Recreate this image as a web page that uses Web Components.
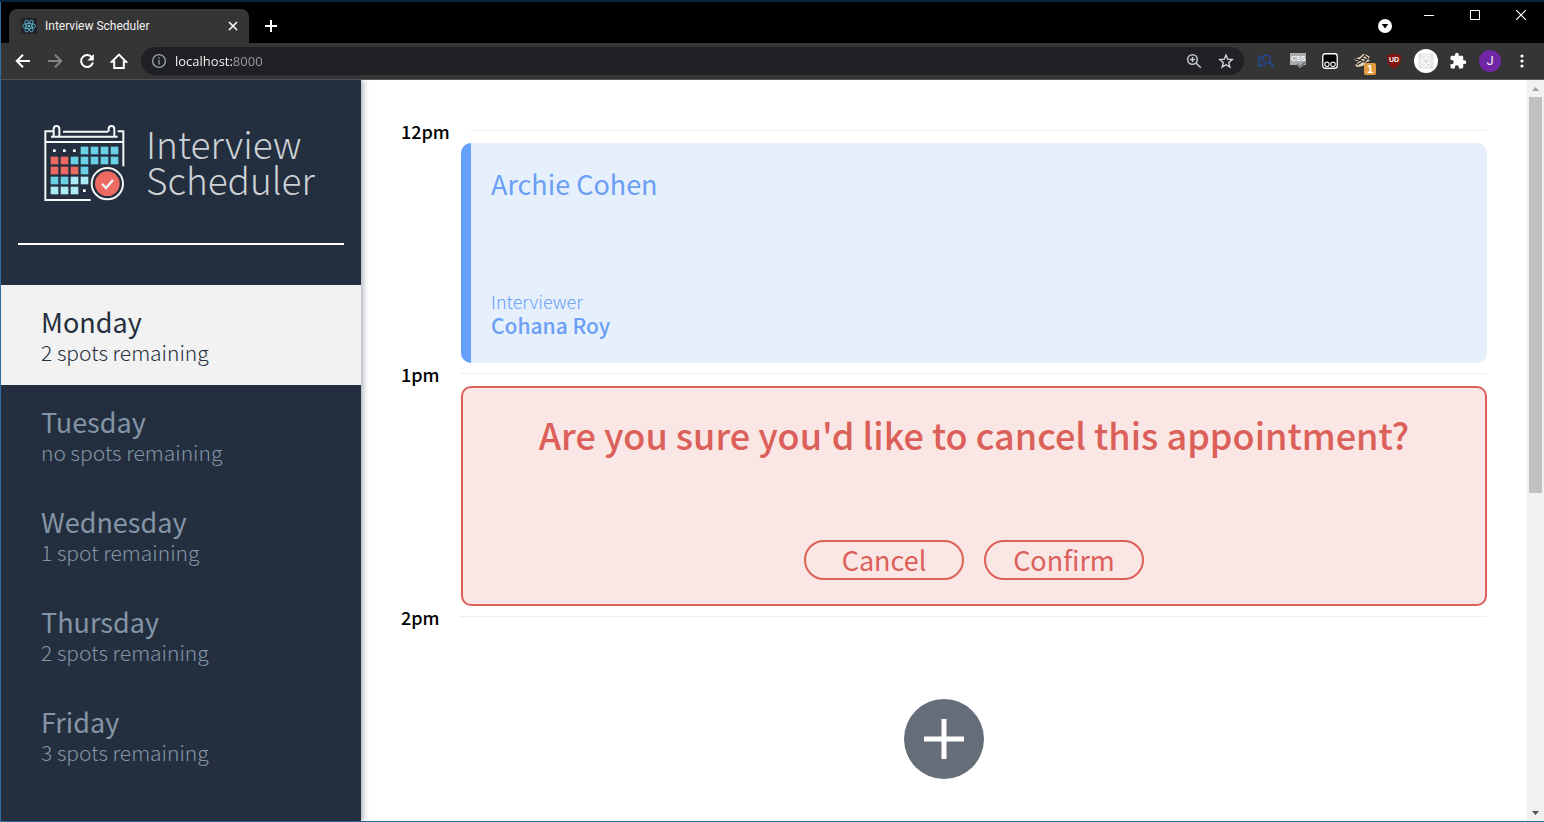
<!DOCTYPE html>
<html lang="en">
<head>
<meta charset="utf-8">
<meta name="viewport" content="width=device-width, initial-scale=1">
<title>Interview Scheduler</title>
<style>
  html, body { margin: 0; height: 100%; }
  body {
    --navy: #232f3e;
    --grey: #8395a7;
    --blue: #649ffa;
    --red: #db6059;
    font-family: "Noto Sans CJK TC", "Noto Sans CJK SC", sans-serif;
    overflow: hidden;
  }
</style>
</head>
<body>
<browser-window>
  <tab-strip slot="tabs"></tab-strip>
  <tool-bar slot="toolbar"></tool-bar>
  <app-sidebar slot="page">
    <day-item name="Monday" spots="2 spots remaining" selected></day-item>
    <day-item name="Tuesday" spots="no spots remaining"></day-item>
    <day-item name="Wednesday" spots="1 spot remaining"></day-item>
    <day-item name="Thursday" spots="2 spots remaining"></day-item>
    <day-item name="Friday" spots="3 spots remaining"></day-item>
  </app-sidebar>
  <app-schedule slot="page">
    <appointment-slot time="12pm">
      <booked-card student="Archie Cohen" interviewer="Cohana Roy"></booked-card>
    </appointment-slot>
    <appointment-slot time="1pm">
      <confirm-card>Are you sure you'd like to cancel this appointment?</confirm-card>
    </appointment-slot>
    <appointment-slot time="2pm">
      <empty-slot></empty-slot>
    </appointment-slot>
  </app-schedule>
  <scroll-rail slot="page"></scroll-rail>
</browser-window>

<script>
const define = (name, render) => customElements.define(name, class extends HTMLElement {
  constructor() {
    super();
    this.attachShadow({ mode: 'open' });
  }
  connectedCallback() {
    this.shadowRoot.innerHTML = render(this);
  }
});

define('browser-window', () => `
  <style>
    :host {
      display: grid; grid-template-rows: 41px 37px minmax(0, 1fr);
      box-sizing: border-box; height: 100vh;
      border-top: 2px solid #06263f; border-bottom: 1px solid #2d6d9f;
      background: #fff;
    }
    .page { display: grid; grid-template-columns: 361px minmax(0, 1fr) 17px; min-height: 0; }
  </style>
  <slot name="tabs"></slot>
  <slot name="toolbar"></slot>
  <div class="page"><slot name="page"></slot></div>`);

define('tab-strip', () => `
  <style>
    :host {
      display: flex; align-items: flex-end; background: #000; padding-left: 8px;
      border-left: 1px solid #2d6d9f;
      font-family: Roboto, "Open Sans", sans-serif;
    }
    button { all: unset; display: flex; align-items: center; justify-content: center; }
    .tab {
      display: flex; align-items: center; box-sizing: border-box;
      width: 240px; height: 34px; padding: 0 9px 0 12px;
      background: #353535; border-radius: 8px 8px 0 0;
      color: #f1f1f1; font-size: 12px; line-height: 16px;
    }
    .favicon { background: #20232a; margin-right: 8px; flex: none; }
    .title { flex: 1; white-space: nowrap; }
    .new { width: 28px; height: 34px; margin-left: 8px; }
    .controls { display: flex; align-items: flex-start; margin-left: auto; align-self: flex-start; }
    .menu { width: 20px; height: 20px; margin-right: 11px; padding-top: 14px; }
    .win { width: 46px; height: 26px; }
  </style>
  <div class="tab">
    <svg class="favicon" width="16" height="16" viewBox="0 0 16 16" fill="none" stroke="#61bcd6" stroke-width=".8">
      <ellipse cx="8" cy="8" rx="6.6" ry="2.6"/>
      <ellipse cx="8" cy="8" rx="6.6" ry="2.6" transform="rotate(60 8 8)"/>
      <ellipse cx="8" cy="8" rx="6.6" ry="2.6" transform="rotate(120 8 8)"/>
      <circle cx="8" cy="8" r="1" fill="#61dafb"/>
    </svg>
    <span class="title">Interview Scheduler</span>
    <button aria-label="Close tab"><svg width="14" height="14" viewBox="0 0 14 14" stroke="#fff" stroke-width="1.6"><path d="M3 3l8 8M11 3l-8 8"/></svg></button>
  </div>
  <button class="new" aria-label="New tab"><svg width="14" height="14" viewBox="0 0 14 14" stroke="#fff" stroke-width="2"><path d="M1 7h12M7 1v12"/></svg></button>
  <div class="controls">
    <button class="menu" aria-label="Search tabs"><svg width="14" height="14" viewBox="0 0 14 14"><circle cx="7" cy="7" r="7" fill="#fff"/><path d="M3.8 5h6.4L7 9.6z" fill="#000"/></svg></button>
    <button class="win" aria-label="Minimize"><svg width="10" height="10" viewBox="0 0 10 10"><path d="M0 5.5h10" stroke="#fff"/></svg></button>
    <button class="win" aria-label="Maximize"><svg width="10" height="10" viewBox="0 0 10 10"><path d="M.5.5h9v9h-9z" fill="none" stroke="#fff"/></svg></button>
    <button class="win" aria-label="Close"><svg width="10" height="10" viewBox="0 0 10 10"><path d="M0 0l10 10M10 0L0 10" stroke="#fff" stroke-width="1.2"/></svg></button>
  </div>`);

define('tool-bar', () => `
  <style>
    :host {
      display: flex; align-items: center; box-sizing: border-box;
      padding: 0 6px;
      background: #353535; border-bottom: 1px solid #5a5a5a; border-left: 1px solid #2d6d9f;
      font-family: "Open Sans", sans-serif;
    }
    button { all: unset; display: flex; align-items: center; justify-content: center; width: 32px; height: 28px; flex: none; }
    .address {
      display: flex; align-items: center; flex: 1; min-width: 0; height: 28px;
      margin: 0 6px; padding: 0 2px 0 10px; background: #202124; border-radius: 14px;
    }
    input {
      flex: 1; min-width: 0; border: 0; outline: 0; padding: 0 0 0 8px; height: 20px;
      font: 13px/20px "Open Sans", sans-serif; color: transparent;
      background: linear-gradient(90deg, #fff 66px, #9a9da1 66px);
      -webkit-background-clip: text; background-clip: text;
    }
    .ext text { font-family: "Liberation Sans", sans-serif; font-weight: bold; }
    .avatar { width: 22px; height: 22px; border-radius: 50%; background: #7127a5; color: #eee; font: 13px/22px Roboto, sans-serif; margin: 0 5px; }
  </style>
  <button aria-label="Back"><svg width="16" height="16" viewBox="0 0 16 16" fill="none" stroke="#fff" stroke-width="2"><path d="M15 8H2M8 1.8L1.8 8 8 14.2"/></svg></button>
  <button aria-label="Forward"><svg width="16" height="16" viewBox="0 0 16 16" fill="none" stroke="#858585" stroke-width="2"><path d="M1 8h13M8 1.8L14.2 8 8 14.2"/></svg></button>
  <button aria-label="Reload"><svg width="16" height="16" viewBox="0 0 16 16"><path d="M13.2 4.8A6 6 0 1 0 13.9 9.6" fill="none" stroke="#fff" stroke-width="2"/><path d="M14.8 1v6.4H8.4z" fill="#fff"/></svg></button>
  <button aria-label="Home"><svg width="18" height="18" viewBox="0 0 18 18"><path d="M1.8 9.8L9 2.6l7.2 7.2h-2.4V16H4.2V9.8z" fill="none" stroke="#fff" stroke-width="2"/></svg></button>
  <div class="address">
    <svg width="16" height="16" viewBox="0 0 16 16" fill="none" stroke="#9aa0a6" stroke-width="1.4"><circle cx="8" cy="8" r="6.4"/><path d="M8 7v4.6M8 4.2v1.6"/></svg>
    <input type="text" value="localhost:8000" aria-label="Address" spellcheck="false">
    <button aria-label="Zoom"><svg width="16" height="16" viewBox="0 0 16 16" fill="none" stroke="#c4c7ca" stroke-width="1.5"><circle cx="6.5" cy="6.5" r="4.8"/><path d="M10 10l4.8 4.8M4 6.5h5M6.5 4v5"/></svg></button>
    <button aria-label="Bookmark"><svg width="16" height="16" viewBox="0 0 16 16" fill="none" stroke="#d5d7d9" stroke-width="1.4"><path d="M8 2l1.7 4.2 4.5.4-3.4 3 1 4.4L8 11.7 4.2 14l1-4.4-3.4-3 4.5-.4z"/></svg></button>
  </div>
  <button class="ext" aria-label="Inspector"><svg width="18" height="16" viewBox="0 0 18 16" fill="none" stroke="#25468c" stroke-width="1.6"><path d="M5 3.5H2v9h7M.5 13h4"/><circle cx="9.5" cy="6" r="4"/><path d="M12.5 9l4.3 4.5" stroke-width="2.2"/></svg></button>
  <button class="ext" aria-label="CSS tool"><svg width="18" height="18" viewBox="0 0 18 18"><path d="M1 1h16v12h-2l-4 3-3-3H1z" fill="#a9abac"/><path d="M8 12l3 3 5-5" stroke="#777" stroke-width="2" fill="none"/><text x="2" y="9" font-size="7" fill="#fff">CSS</text></svg></button>
  <button class="ext" aria-label="Userscripts"><svg width="16" height="16" viewBox="0 0 16 16"><rect x=".75" y=".75" width="14.5" height="14.5" rx="2.5" fill="#000" stroke="#fff" stroke-width="1.3"/><g fill="none" stroke="#e8e8e8" stroke-width="1.2"><circle cx="5" cy="11.3" r="2.2"/><circle cx="11" cy="11.3" r="2.2"/></g></svg></button>
  <button class="ext" aria-label="Debugger, 1 notice"><svg width="28" height="28" viewBox="0 0 28 28"><g transform="translate(3 3)"><path d="M3 9l6-2 3-3 4 1 3 2-2 2 2 2-4 1-3 4-6 1-2-2 3-2z" fill="#e4d4bd"/><path d="M2 13l6-2 5-5M4 9l5 1 4 2 4-4M6 15l5-3M13 5l4 3M11 8l5 2" stroke="#282420" stroke-width="1.3" fill="none"/></g><rect x="16" y="16" width="12" height="12" rx="2" fill="#e19a3d"/><text x="19" y="26" font-size="11" fill="#fff">1</text></svg></button>
  <button class="ext" aria-label="Blocker"><svg width="16" height="16" viewBox="0 0 16 16"><path d="M8 0c2 1.5 4 2 7 2 .4 6.5-1.5 11-7 14C2.5 13 .6 8.5 1 2c3 0 5-.5 7-2z" fill="#801512"/><text x="3" y="9" font-size="7" fill="#fff">UD</text></svg></button>
  <button class="ext" aria-label="React tools"><svg width="24" height="24" viewBox="0 0 24 24"><circle cx="12" cy="12" r="12" fill="#fff"/><rect x="4.5" y="4.5" width="15" height="15" rx="2" fill="#e3e3e3"/><g fill="none" stroke="#fafafa" stroke-width="1"><ellipse cx="12" cy="12" rx="6.5" ry="2.6"/><ellipse cx="12" cy="12" rx="6.5" ry="2.6" transform="rotate(60 12 12)"/><ellipse cx="12" cy="12" rx="6.5" ry="2.6" transform="rotate(120 12 12)"/></g></svg></button>
  <button aria-label="Extensions"><svg width="18" height="18" viewBox="0 0 24 24"><path fill="#fff" d="M20.5 11H19V7c0-1.100-.9-2-2-2h-4V3.5a2.5 2.5 0 0 0-5 0V5H4c-1.100 0-2 .9-2 2v3.8h1.5a2.700 2.700 0 0 1 0 5.400H2V20c0 1.100.9 2 2 2h3.800v-1.500a2.700 2.700 0 0 1 5.400 0V22H17c1.100 0 2-.9 2-2v-4h1.500a2.500 2.500 0 0 0 0-5z"/></svg></button>
  <button class="avatar" aria-label="Profile">J</button>
  <button aria-label="Menu"><svg width="4" height="16" viewBox="0 0 4 16" fill="#fff"><circle cx="2" cy="3" r="1.6"/><circle cx="2" cy="8" r="1.6"/><circle cx="2" cy="13" r="1.6"/></svg></button>`);

/* Calendar squares of the logo: one string per row, one key per day. */
const cells = ['...cccc', 'rrccccc', 'rrrc', 'ccll', 'lll.'];
const tones = { c: '#6bd0e6', r: '#ec6a61', l: '#aeeaf6' };
const calendar = cells.map((row, r) => [...row].map((key, c) => {
  const x = 61 + c * 30, y = 109 + r * 30;
  return key === '.'
    ? `<rect x="${x + 7}" y="${y + 8}" width="8" height="8" fill="#fff"/>`
    : `<rect x="${x}" y="${y}" width="23" height="23" fill="${tones[key]}"/>`;
}).join('')).join('');

define('app-sidebar', () => `
  <style>
    :host {
      display: flex; flex-direction: column; position: relative; min-height: 0;
      background: var(--navy); border-left: 1px solid #2d6d9f;
      box-shadow: 2px 0 6px rgba(34, 47, 62, .4);
    }
    header { display: flex; gap: 21px; padding: 43px 0 41px 42px; }
    h1 { margin: 0; padding-top: 2px; font-weight: 300; font-size: 37px; line-height: 36px; color: #ccd1d6; }
    hr { margin: 0 17px 40px; border: 0; height: 2px; background: #fff; flex: none; }
    h1 span { display: block; }
  </style>
  <header>
    <svg width="82" height="79" viewBox="38 38 246 237" fill="none" stroke="#f4f6f8" stroke-width="6">
      <path d="M181 269H45V63h25M98 64h135M262 63h17v105M45 95h234M62 79h200"/>
      <path d="M70 79V56c0-12 17-12 17 0v23M235 64v-8c0-12 17-12 17 0v23"/>
      <g stroke="none">${calendar}</g>
      <circle cx="231" cy="220" r="51" fill="#232f3e" stroke="none"/>
      <circle cx="231" cy="220" r="47" fill="#232f3e"/>
      <circle cx="231" cy="220" r="37" fill="#ec6a61" stroke="none"/>
      <path d="M215 220l12 13 21-24" stroke-width="7"/>
    </svg>
    <h1><span>Interview</span><span>Scheduler</span></h1>
  </header>
  <hr>
  <nav aria-label="Days"><slot></slot></nav>`);

define('day-item', el => `
  <style>
    :host { display: block; color: var(--grey); }
    :host([selected]) { background: #f2f2f2; color: var(--navy); }
    button { all: unset; box-sizing: border-box; display: block; width: 100%; padding: 20px 40px; cursor: pointer; }
    span { display: block; }
    .name { font-size: 27px; line-height: 34px; }
    .spots { font-size: 21px; line-height: 26px; font-weight: 200; }
  </style>
  <button ${el.hasAttribute('selected') ? 'aria-current="true"' : ''}>
    <span class="name">${el.getAttribute('name')}</span>
    <span class="spots">${el.getAttribute('spots')}</span>
  </button>`);

define('app-schedule', () => `
  <style>
    :host { display: block; padding: 40px 40px 0; min-width: 0; min-height: 0; overflow: hidden; }
  </style>
  <slot></slot>`);

define('appointment-slot', el => `
  <style>
    :host { display: block; }
    header { display: flex; align-items: flex-start; gap: 20px; height: 23px; }
    h2 { margin: 0; font-size: 18px; font-weight: 500; line-height: 22px; color: #000; }
    hr { flex: 1; margin: 10px 0 0; border: 0; height: 1px; background: #eee; }
  </style>
  <header><h2>${el.getAttribute('time')}</h2><hr></header>
  <slot></slot>`);

define('booked-card', el => `
  <style>
    :host {
      display: flex; flex-direction: column; justify-content: space-between; box-sizing: border-box;
      height: 220px; margin-left: 60px; padding: 20px 20px 26px;
      border-left: 10px solid var(--blue); border-radius: 10px;
      background: #e6f0fd; color: #6a9ff5;
    }
    h2, h3, h4 { margin: 0; }
    h2 { font-size: 27px; line-height: 42px; font-weight: 400; }
    h4 { font-size: 18px; line-height: 24px; font-weight: 200; }
    h3 { font-size: 21px; line-height: 24px; font-weight: 500; }
  </style>
  <h2>${el.getAttribute('student')}</h2>
  <section><h4>Interviewer</h4><h3>${el.getAttribute('interviewer')}</h3></section>`);

define('confirm-card', () => `
  <style>
    :host {
      display: flex; flex-direction: column; align-items: center; justify-content: space-between;
      box-sizing: border-box; height: 220px; margin-left: 60px; padding: 20px 20px 24px;
      border: 2px solid var(--red); border-radius: 10px;
      background: #fae6e4; color: var(--red);
    }
    h1 { margin: 0; font-size: 36px; line-height: 52px; font-weight: 500; text-align: center; }
    section { display: flex; gap: 20px; }
    button {
      box-sizing: border-box; width: 160px; height: 40px; padding: 0;
      border: 2px solid var(--red); border-radius: 20px; background: none;
      color: inherit; font-family: inherit; font-size: 27px; line-height: 36px;
    }
  </style>
  <h1><slot></slot></h1>
  <section><button>Cancel</button><button>Confirm</button></section>`);

define('empty-slot', () => `
  <style>
    :host { display: flex; align-items: center; justify-content: center; height: 220px; }
    button { all: unset; display: block; width: 80px; height: 80px; cursor: pointer; }
    svg { display: block; }
  </style>
  <button aria-label="Add appointment">
    <svg width="80" height="80" viewBox="0 0 80 80"><circle cx="40" cy="40" r="40" fill="#656e78"/><path d="M20 40h40M40 20v40" stroke="#fff" stroke-width="5"/></svg>
  </button>`);

define('scroll-rail', () => `
  <style>
    :host { display: grid; grid-template-rows: 17px minmax(0, 1fr) 17px; background: #f1f1f1; justify-items: center; align-items: center; }
    .track { align-self: stretch; width: 13px; }
    .thumb { height: 56%; background: #c1c1c1; }
  </style>
  <svg width="7" height="4" viewBox="0 0 7 4"><path d="M0 4l3.5-4L7 4z" fill="#a3a3a3"/></svg>
  <div class="track"><div class="thumb"></div></div>
  <svg width="7" height="4" viewBox="0 0 7 4"><path d="M0 0l3.5 4L7 0z" fill="#505050"/></svg>`);
</script>
</body>
</html>
